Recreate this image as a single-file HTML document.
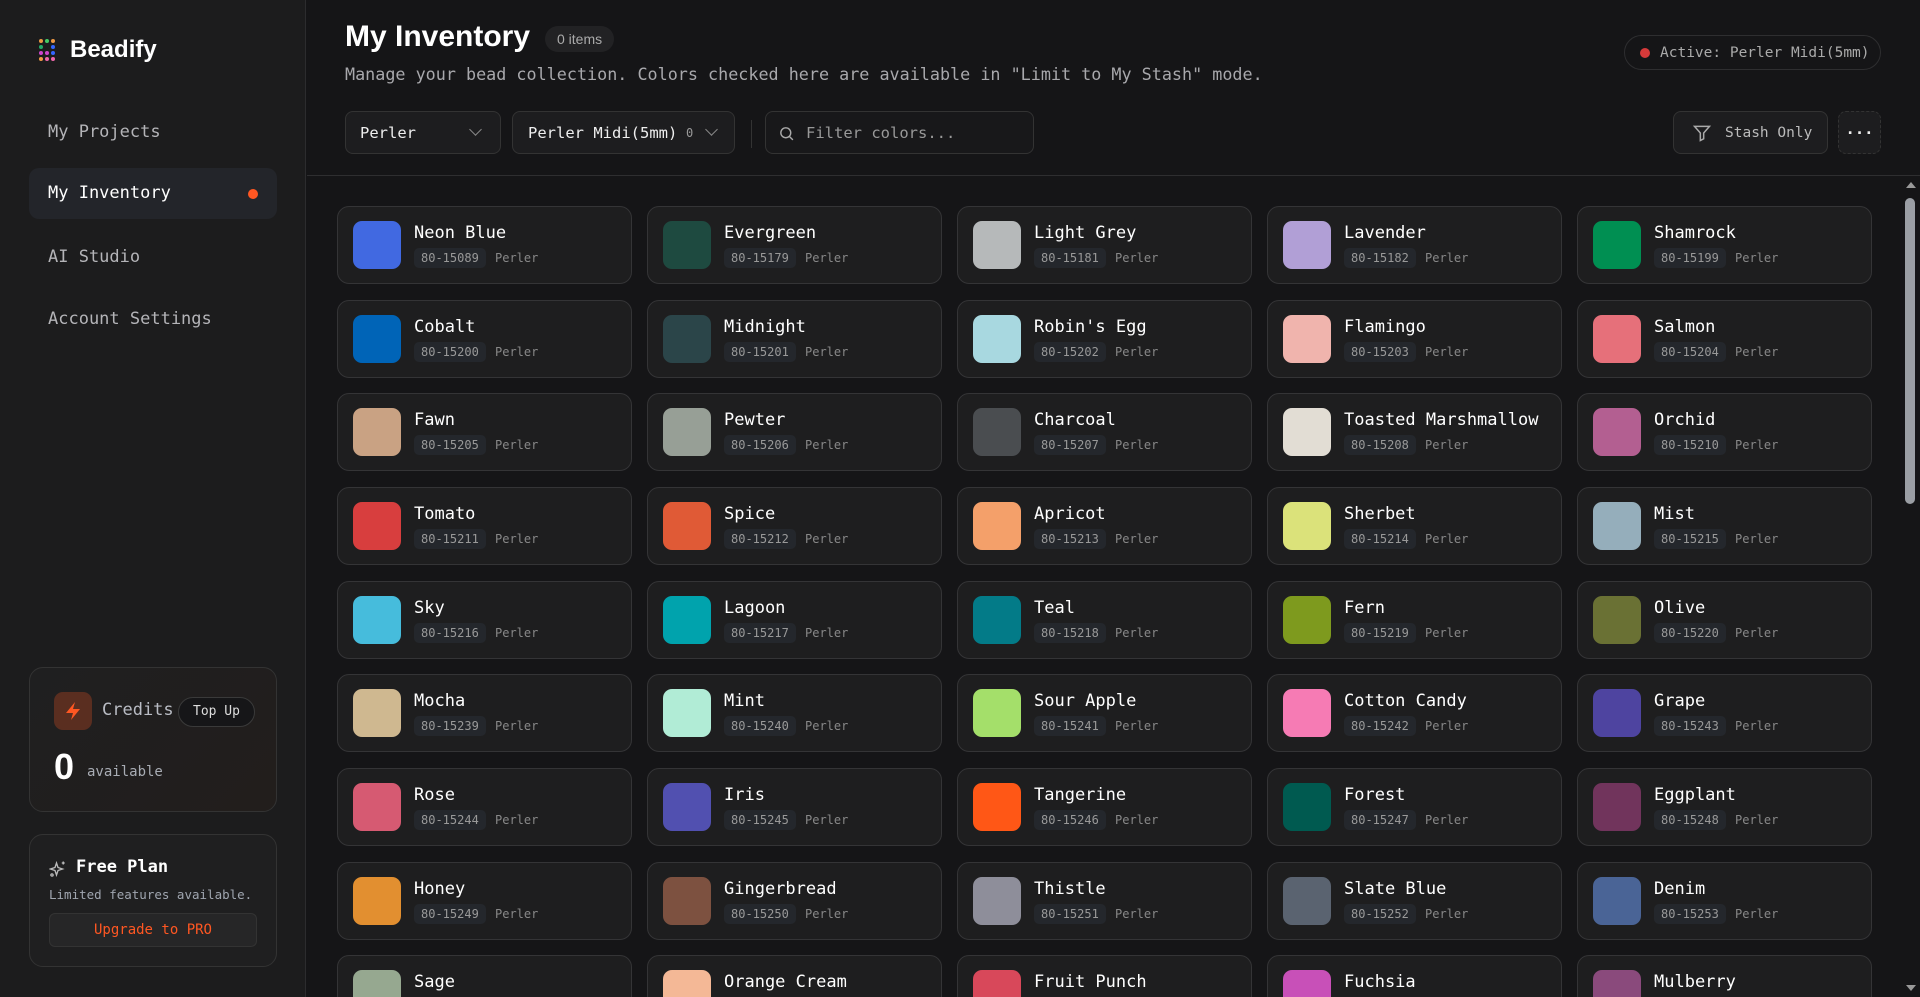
<!DOCTYPE html>
<html style="width:1920px;height:997px;overflow:hidden"><head><meta charset="utf-8"><style>
*{box-sizing:border-box;margin:0;padding:0}
body{width:1920px;height:997px;overflow:hidden;background:#151517;font-family:"DejaVu Sans Mono","Liberation Mono",monospace;color:#e8e8e8;position:relative}
.side{position:absolute;left:0;top:0;width:306px;height:997px;background:#1c1c1d;border-right:1px solid #2c2c2e}
.logo{position:absolute;left:38px;top:36px;display:flex;align-items:center;gap:14px;font-family:"Liberation Sans",sans-serif;font-weight:bold;font-size:24px;color:#fff}
.nav{position:absolute;left:29px;width:248px;height:51px;line-height:51px;padding-left:19px;font-size:17px;color:#b4b4b8;border-radius:10px}
.nav.act{background:#23252a;color:#fff}
.nav.act:after{content:"";position:absolute;right:19px;top:21px;width:10px;height:10px;border-radius:50%;background:#ff5722}
.card{position:absolute;left:29px;width:248px;border:1px solid #333;border-radius:14px;background:#1f1f20}
.main{position:absolute;left:307px;top:0;right:0}
h1{position:absolute;left:38px;top:20px;font-family:"Liberation Sans",sans-serif;font-size:30px;font-weight:bold;color:#fff}
.badge{position:absolute;left:238px;top:26px;height:26px;line-height:26px;padding:0 12px;border-radius:13px;background:#222224;font-family:"Liberation Sans",sans-serif;font-size:14px;color:#aaa}
.sub{position:absolute;left:38px;top:64px;font-size:16.75px;color:#a8a8ac}
.ctl{position:absolute;top:111px;height:43px;border:1px solid #333;border-radius:8px;background:#1d1d1f;font-size:15.5px;display:flex;align-items:center;color:#eee}
.chev{width:9px;height:9px;border-right:1.5px solid #888;border-bottom:1.5px solid #888;transform:rotate(45deg);position:absolute;top:13px}
.hr{position:absolute;left:307px;right:0;top:175px;border-top:1px solid #2e2e30}
.g{position:absolute;width:295px;height:78px;border:1px solid #343436;border-radius:12px;background:#1e1e1f;overflow:hidden}
.g i{position:absolute;left:15px;top:14px;width:48px;height:48px;border-radius:9px}
.g b{position:absolute;left:76px;top:16px;font-weight:normal;font-size:17px;color:#fff;white-space:nowrap}
.g s{position:absolute;left:76px;top:41px;text-decoration:none;font-size:12px;color:#999;background:#24272c;padding:3px 7px;border-radius:5px}
.g u{position:absolute;left:157px;top:44px;text-decoration:none;font-size:12px;color:#888}
</style></head><body>
<div class="side">
<div class="logo"><svg width="18" height="24" viewBox="0 0 18 24"><g><circle cx="3" cy="3" r="2" fill="#e94"/><circle cx="9" cy="3" r="2" fill="#4c6"/><circle cx="15" cy="3" r="2" fill="#e94"/><circle cx="3" cy="9" r="2" fill="#2a6"/><circle cx="15" cy="9" r="2" fill="#36f"/><circle cx="3" cy="15" r="2" fill="#c4c"/><circle cx="9" cy="15" r="2" fill="#c4c"/><circle cx="15" cy="15" r="2" fill="#36f"/><circle cx="3" cy="21" r="2" fill="#e94"/><circle cx="9" cy="21" r="2" fill="#e6a"/><circle cx="15" cy="21" r="2" fill="#e6a"/></g></svg>Beadify</div>
<div class="nav" style="top:107px">My Projects</div>
<div class="nav act" style="top:168px">My Inventory</div>
<div class="nav" style="top:232px">AI Studio</div>
<div class="nav" style="top:294px">Account Settings</div>
<div class="card" style="top:667px;height:145px;background:linear-gradient(135deg,#1f1f20,#221e1c)">
 <div style="position:absolute;left:24px;top:24px;width:38px;height:38px;border-radius:9px;background:#5a2e20;display:flex;align-items:center;justify-content:center"><svg width="18" height="20" viewBox="0 0 18 20"><path d="M11 1L2 12h7l-2 7 9-11h-7z" fill="#ff5722"/></svg></div>
 <div style="position:absolute;left:72px;top:32px;font-size:17px;color:#b9bcc4">Credits</div>
 <div style="position:absolute;left:148px;top:29px;height:30px;line-height:28px;padding:0 14px;border:1px solid #3a3a3a;border-radius:15px;background:#161618;font-size:13px;color:#ddd">Top Up</div>
 <div style="position:absolute;left:24px;top:78px;font-family:'Liberation Sans',sans-serif;font-size:36px;font-weight:bold;color:#fff">0</div>
 <div style="position:absolute;left:57px;top:96px;font-size:14px;color:#a8acb4">available</div>
</div>
<div class="card" style="top:834px;height:133px">
 <svg style="position:absolute;left:19px;top:25px" width="18" height="18" viewBox="0 0 24 24" fill="none" stroke="#bbb" stroke-width="1.8"><path d="M10 4l2 6 6 2-6 2-2 6-2-6-6-2 6-2z"/><path d="M19 2v4M17 4h4"/><circle cx="4" cy="20" r="1.5"/></svg>
 <div style="position:absolute;left:46px;top:22px;font-size:17px;font-weight:bold;color:#fff">Free Plan</div>
 <div style="position:absolute;left:19px;top:52px;font-size:12.5px;color:#a0a6b0">Limited features available.</div>
 <div style="position:absolute;left:19px;top:78px;width:208px;height:34px;line-height:32px;border:1px solid #333;border-radius:6px;background:#262627;text-align:center;font-size:14px;color:#ff5722">Upgrade to PRO</div>
</div>
</div>
<div class="main">
<h1>My Inventory</h1>
<div class="badge">0 items</div>
<div class="sub">Manage your bead collection. Colors checked here are available in "Limit to My Stash" mode.</div>
<div style="position:absolute;left:1317px;top:35px;height:35px;width:257px;border:1px solid #2e2e30;border-radius:18px;display:flex;align-items:center;padding-left:15px;gap:10px;font-size:14.5px;color:#aaa"><span style="width:10px;height:10px;border-radius:50%;background:#d63a3a"></span>Active: Perler Midi(5mm)</div>
<div class="ctl" style="left:38px;width:156px;padding-left:14px">Perler<span class="chev" style="left:125px"></span></div>
<div class="ctl" style="left:205px;width:223px;padding-left:15px">Perler Midi(5mm)<span style="position:absolute;left:173px;font-size:12px;color:#999">0</span><span class="chev" style="left:194px"></span></div>
<div style="position:absolute;left:444px;top:120px;height:28px;border-left:1px solid #333"></div>
<div class="ctl" style="left:458px;width:269px;padding-left:40px;color:#999;background:#18181a">Filter colors...<svg style="position:absolute;left:12px;top:13px" width="17" height="17" viewBox="0 0 24 24" fill="none" stroke="#aaa" stroke-width="2"><circle cx="11" cy="11" r="7"/><path d="M16 16l5 5"/></svg></div>
<div class="ctl" style="left:1366px;width:155px;padding-left:51px;color:#bbb;font-size:14.5px"><svg style="position:absolute;left:18px;top:11px" width="20" height="20" viewBox="0 0 24 24" fill="none" stroke="#aaa" stroke-width="1.8"><path d="M3 4h18l-7 8v7l-4 2v-9z"/></svg>Stash Only</div>
<div class="ctl" style="left:1531px;width:43px;border-style:dashed;justify-content:center;font-weight:bold">···</div>
</div>
<div class="hr"></div>
<div style="position:absolute;left:1902px;top:176px;width:18px;height:821px;background:#151517;z-index:2"><div style="position:absolute;left:4px;top:6px;border:5px solid transparent;border-bottom:6px solid #999;border-top:0"></div><div style="position:absolute;left:3px;top:22px;width:10px;height:306px;border-radius:5px;background:#9a9ea4"></div><div style="position:absolute;left:4px;bottom:6px;border:5px solid transparent;border-top:6px solid #999;border-bottom:0"></div></div>

<div style="position:absolute;left:307px;top:176px;width:1595px;height:821px;overflow:hidden">
<div style="position:absolute;left:-307px;top:-176px;width:1920px;height:997px">
<div class="g" style="left:337px;top:206px"><i style="background:#4169e1"></i><b>Neon Blue</b><s>80-15089</s><u>Perler</u></div>
<div class="g" style="left:647px;top:206px"><i style="background:#1e4a40"></i><b>Evergreen</b><s>80-15179</s><u>Perler</u></div>
<div class="g" style="left:957px;top:206px"><i style="background:#b6b9ba"></i><b>Light Grey</b><s>80-15181</s><u>Perler</u></div>
<div class="g" style="left:1267px;top:206px"><i style="background:#b19fd6"></i><b>Lavender</b><s>80-15182</s><u>Perler</u></div>
<div class="g" style="left:1577px;top:206px"><i style="background:#008f52"></i><b>Shamrock</b><s>80-15199</s><u>Perler</u></div>

<div class="g" style="left:337px;top:300px"><i style="background:#0064b7"></i><b>Cobalt</b><s>80-15200</s><u>Perler</u></div>
<div class="g" style="left:647px;top:300px"><i style="background:#2b4549"></i><b>Midnight</b><s>80-15201</s><u>Perler</u></div>
<div class="g" style="left:957px;top:300px"><i style="background:#a8d8e0"></i><b>Robin's Egg</b><s>80-15202</s><u>Perler</u></div>
<div class="g" style="left:1267px;top:300px"><i style="background:#f0b4ad"></i><b>Flamingo</b><s>80-15203</s><u>Perler</u></div>
<div class="g" style="left:1577px;top:300px"><i style="background:#e6707a"></i><b>Salmon</b><s>80-15204</s><u>Perler</u></div>

<div class="g" style="left:337px;top:393px"><i style="background:#c9a283"></i><b>Fawn</b><s>80-15205</s><u>Perler</u></div>
<div class="g" style="left:647px;top:393px"><i style="background:#979f96"></i><b>Pewter</b><s>80-15206</s><u>Perler</u></div>
<div class="g" style="left:957px;top:393px"><i style="background:#4a4d50"></i><b>Charcoal</b><s>80-15207</s><u>Perler</u></div>
<div class="g" style="left:1267px;top:393px"><i style="background:#e2ddd4"></i><b>Toasted Marshmallow</b><s>80-15208</s><u>Perler</u></div>
<div class="g" style="left:1577px;top:393px"><i style="background:#b35f91"></i><b>Orchid</b><s>80-15210</s><u>Perler</u></div>

<div class="g" style="left:337px;top:487px"><i style="background:#d83e3e"></i><b>Tomato</b><s>80-15211</s><u>Perler</u></div>
<div class="g" style="left:647px;top:487px"><i style="background:#e05a36"></i><b>Spice</b><s>80-15212</s><u>Perler</u></div>
<div class="g" style="left:957px;top:487px"><i style="background:#f4a06a"></i><b>Apricot</b><s>80-15213</s><u>Perler</u></div>
<div class="g" style="left:1267px;top:487px"><i style="background:#dbe27a"></i><b>Sherbet</b><s>80-15214</s><u>Perler</u></div>
<div class="g" style="left:1577px;top:487px"><i style="background:#95aebb"></i><b>Mist</b><s>80-15215</s><u>Perler</u></div>

<div class="g" style="left:337px;top:581px"><i style="background:#46bcdc"></i><b>Sky</b><s>80-15216</s><u>Perler</u></div>
<div class="g" style="left:647px;top:581px"><i style="background:#00a3ad"></i><b>Lagoon</b><s>80-15217</s><u>Perler</u></div>
<div class="g" style="left:957px;top:581px"><i style="background:#037b88"></i><b>Teal</b><s>80-15218</s><u>Perler</u></div>
<div class="g" style="left:1267px;top:581px"><i style="background:#7e9a1e"></i><b>Fern</b><s>80-15219</s><u>Perler</u></div>
<div class="g" style="left:1577px;top:581px"><i style="background:#6a7134"></i><b>Olive</b><s>80-15220</s><u>Perler</u></div>

<div class="g" style="left:337px;top:674px"><i style="background:#cfb890"></i><b>Mocha</b><s>80-15239</s><u>Perler</u></div>
<div class="g" style="left:647px;top:674px"><i style="background:#b1ecd6"></i><b>Mint</b><s>80-15240</s><u>Perler</u></div>
<div class="g" style="left:957px;top:674px"><i style="background:#a4df6a"></i><b>Sour Apple</b><s>80-15241</s><u>Perler</u></div>
<div class="g" style="left:1267px;top:674px"><i style="background:#f67bb4"></i><b>Cotton Candy</b><s>80-15242</s><u>Perler</u></div>
<div class="g" style="left:1577px;top:674px"><i style="background:#4e44a0"></i><b>Grape</b><s>80-15243</s><u>Perler</u></div>

<div class="g" style="left:337px;top:768px"><i style="background:#d65a72"></i><b>Rose</b><s>80-15244</s><u>Perler</u></div>
<div class="g" style="left:647px;top:768px"><i style="background:#5150b0"></i><b>Iris</b><s>80-15245</s><u>Perler</u></div>
<div class="g" style="left:957px;top:768px"><i style="background:#ff5716"></i><b>Tangerine</b><s>80-15246</s><u>Perler</u></div>
<div class="g" style="left:1267px;top:768px"><i style="background:#005a50"></i><b>Forest</b><s>80-15247</s><u>Perler</u></div>
<div class="g" style="left:1577px;top:768px"><i style="background:#71345c"></i><b>Eggplant</b><s>80-15248</s><u>Perler</u></div>

<div class="g" style="left:337px;top:862px"><i style="background:#e28f30"></i><b>Honey</b><s>80-15249</s><u>Perler</u></div>
<div class="g" style="left:647px;top:862px"><i style="background:#7d5140"></i><b>Gingerbread</b><s>80-15250</s><u>Perler</u></div>
<div class="g" style="left:957px;top:862px"><i style="background:#8e8e9a"></i><b>Thistle</b><s>80-15251</s><u>Perler</u></div>
<div class="g" style="left:1267px;top:862px"><i style="background:#5a6370"></i><b>Slate Blue</b><s>80-15252</s><u>Perler</u></div>
<div class="g" style="left:1577px;top:862px"><i style="background:#4a6496"></i><b>Denim</b><s>80-15253</s><u>Perler</u></div>

<div class="g" style="left:337px;top:955px"><i style="background:#96a890"></i><b>Sage</b><s>80-15254</s><u>Perler</u></div>
<div class="g" style="left:647px;top:955px"><i style="background:#f4b896"></i><b>Orange Cream</b><s>80-15255</s><u>Perler</u></div>
<div class="g" style="left:957px;top:955px"><i style="background:#d8485a"></i><b>Fruit Punch</b><s>80-15256</s><u>Perler</u></div>
<div class="g" style="left:1267px;top:955px"><i style="background:#c850b8"></i><b>Fuchsia</b><s>80-15257</s><u>Perler</u></div>
<div class="g" style="left:1577px;top:955px"><i style="background:#8a4a7c"></i><b>Mulberry</b><s>80-15258</s><u>Perler</u></div>
</div></div>
</body></html>
